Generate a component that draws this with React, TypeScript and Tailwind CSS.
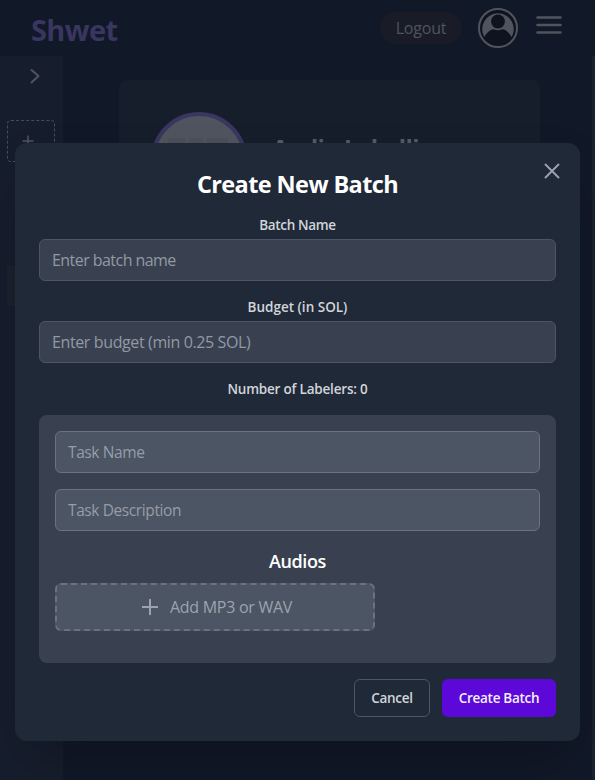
import React from "react";

function Header() {
  return (
    <header className="flex h-14 shrink-0 items-center pr-[33px] pl-[31px]">
      <span className="mt-[3px] text-[29px] leading-9 font-bold tracking-[-0.6px] text-[#39365f]">Shwet</span>
      <div className="ml-auto flex h-8 w-[82px] items-center justify-center rounded-full bg-[#191c27] text-[16px] tracking-[-0.2px] text-[#50545e]">
        Logout
      </div>
      <svg className="ml-4 h-10 w-10" viewBox="0 0 40 40" fill="none">
        <circle cx="20" cy="20" r="19" fill="#0e131f" stroke="#50545f" strokeWidth="2" />
        <path d="M6.300 29A15.800 15.800 0 1 1 33.700 29C31 24.200 27 21.300 24.500 21.300Q20 23.200 15.500 21.300C13 21.300 9 24.200 6.300 29Z" fill="#50545f" />
        <circle cx="20" cy="13.500" r="6.900" fill="#0e131f" />
      </svg>
      <svg className="mb-[6px] ml-[18px] h-[18px] w-[26px]" viewBox="0 0 26 18" stroke="#50545f" strokeWidth="2.600" strokeLinecap="round">
        <path d="M1.500 1.500h23M1.500 9h23M1.500 16.500h23" />
      </svg>
    </header>
  );
}

function Sidebar() {
  return (
    <aside className="flex w-[63px] flex-col bg-[#161d2c] pl-[7px]">
      <svg className="mt-3 ml-[23px] h-4 w-3" viewBox="0 0 12 16" fill="none" stroke="#50545f" strokeWidth="2" strokeLinecap="round" strokeLinejoin="round">
        <path d="M1.500 2L8.500 8L1.500 14.500" />
      </svg>
      <div className="mt-9 flex h-[42px] w-12 items-center justify-center rounded border border-dashed border-[#474c57] pr-[6px]">
        <svg className="h-3 w-3" viewBox="0 0 12 12" stroke="#50545f" strokeWidth="1.500">
          <path d="M6 0.500v11M0.500 6h11" />
        </svg>
      </div>
      <div className="mt-[104px] h-10 w-12 bg-[#1b222e]" />
    </aside>
  );
}

interface FieldProps {
  label: string;
  placeholder: string;
  labelClass: string;
  inputClass: string;
}

function Field({ label, placeholder, labelClass, inputClass }: FieldProps) {
  return (
    <label className="mb-4 flex flex-col gap-1 text-center">
      <span className={`text-[13.5px] leading-5 font-semibold text-[#d1d5db] ${labelClass}`}>{label}</span>
      <input
        placeholder={placeholder}
        className={`h-[42px] w-full rounded-md border border-[#4b5563] bg-[#394150] px-3 text-[16px] placeholder:text-[#9199a5] ${inputClass}`}
      />
    </label>
  );
}

function TaskInput({ placeholder }: { placeholder: string }) {
  return (
    <input
      placeholder={placeholder}
      className="mb-4 block h-[42px] w-full rounded-md border border-[#6b7280] bg-[#4c5563] px-3 text-[15.5px] tracking-[-0.4px] placeholder:text-[#959da9]"
    />
  );
}

function BatchModal() {
  return (
    <section className="relative w-[565px] rounded-xl bg-[#202937] p-6 text-center shadow-2xl">
      <button className="absolute top-[20px] right-5 h-4 w-4">
        <svg className="h-4 w-4" viewBox="0 0 16 16" stroke="#9ca3af" strokeWidth="1.900" strokeLinecap="round">
          <path d="M1.500 1.500l13 13M14.500 1.500l-13 13" />
        </svg>
      </button>
      <h2 className="mb-[15px] pt-px text-[23.5px] leading-8 font-bold tracking-[-0.6px] text-white">Create New Batch</h2>
      <Field label="Batch Name" placeholder="Enter batch name" labelClass="tracking-[-0.33px]" inputClass="tracking-[-0.55px]" />
      <Field label="Budget (in SOL)" placeholder="Enter budget (min 0.25 SOL)" labelClass="tracking-[0px]" inputClass="tracking-[-0.38px]" />
      <p className="mb-4 text-[13.5px] leading-5 font-semibold tracking-[-0.2px] text-[#d1d5db]">Number of Labelers: 0</p>
      <div className="mb-4 h-[248px] rounded-lg bg-[#394150] p-4">
        <TaskInput placeholder="Task Name" />
        <TaskInput placeholder="Task Description" />
        <h3 className="mb-2 text-lg leading-7 font-semibold tracking-[-0.4px] text-white">Audios</h3>
        <button className="flex h-12 w-80 items-center justify-center gap-3 rounded-md border-2 border-dashed border-[#6b7280] bg-[#4c5563] pl-1 text-[16px] text-[#9ca3af]">
          <svg className="h-4 w-4" viewBox="0 0 16 16" stroke="#9ca3af" strokeWidth="2">
            <path d="M8 0v16M0 8h16" />
          </svg>
          <span className="tracking-[-0.28px]">Add MP3 or WAV</span>
        </button>
      </div>
      <div className="flex justify-end gap-3 text-[13.5px] font-semibold">
        <button className="h-[38px] w-[76px] rounded-md border border-[#4b5563] tracking-[-0.3px] text-[#d1d5db]">Cancel</button>
        <button className="h-[38px] w-[114px] rounded-md bg-[#5b08d9] tracking-[-0.3px] text-[#f3effc]">Create Batch</button>
      </div>
    </section>
  );
}

export default function App() {
  return (
    <main className="relative flex h-[780px] w-[595px] flex-col overflow-hidden bg-[#111827] font-['Open_Sans','Noto_Sans',sans-serif]">
      <Header />
      <div className="flex min-h-0 flex-1">
        <Sidebar />
        <div className="flex-1 pt-6 pl-14">
          <div className="flex h-[420px] w-[421px] items-start rounded-lg bg-[#161d2b] pt-8 pl-8">
            <div className="h-24 w-24 shrink-0 rounded-full border-4 border-[#39365f] bg-[#50545e] pt-[22px]">
              <div className="mx-auto flex w-[62px] gap-[3px]">
                <i className="h-5 w-[18px] bg-[#4b4f59]" />
                <i className="h-5 w-[14px] bg-[#4b4f59]" />
                <i className="h-5 w-[22px] bg-[#4b4f59]" />
              </div>
            </div>
            <h1 className="mt-5 ml-[25px] text-2xl leading-8 font-bold whitespace-nowrap tracking-[-0.65px] text-[#555a64]">Audio Labelling</h1>
          </div>
        </div>
        <div className="w-[3px] bg-[#1a2130]" />
      </div>
      <div className="absolute inset-0 flex items-start justify-center pt-[143px]">
        <BatchModal />
      </div>
    </main>
  );
}
